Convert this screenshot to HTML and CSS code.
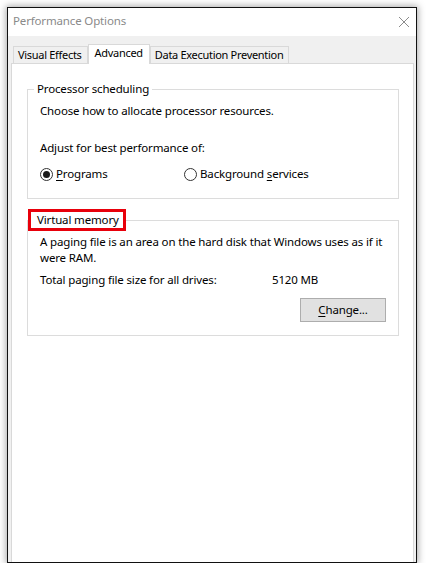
FILE: index.html
```html
<!DOCTYPE html>
<html>
<head>
<meta charset="utf-8">
<link rel="stylesheet" href="styles.css">
</head>
<body>
<div class="window">
  <div class="titlebar">
    <span class="title">Performance Options</span>
    <svg class="close" width="12" height="12" viewBox="0 0 12 12"><path d="M1 1 L11 11 M11 1 L1 11" stroke="#8c8c8c" stroke-width="1" fill="none"/></svg>
  </div>
  <div class="body">
    <div class="tabs">
      <div class="tab">Visual Effects</div>
      <div class="tab active">Advanced</div>
      <div class="tab">Data Execution Prevention</div>
    </div>
    <div class="panel">
      <fieldset class="group group-proc">
        <legend class="legend">Processor scheduling</legend>
        <p class="line">Choose how to allocate processor resources.</p>
        <p class="line adjust">Adjust for best performance of:</p>
        <div class="radios">
          <label class="radio radio-programs"><span class="dot checked"></span><span><u>P</u>rograms</span></label>
          <label class="radio"><span class="dot"></span><span>Background <u>s</u>ervices</span></label>
        </div>
      </fieldset>
      <fieldset class="group group-vm">
        <legend class="legend legend-red">Virtual memory</legend>
        <p class="line">A paging file is an area on the hard disk that Windows uses as if it were RAM.</p>
        <div class="total">
          <span class="total-label">Total paging file size for all drives:</span>
          <span>5120 MB</span>
        </div>
        <div class="actions">
          <button class="btn"><u>C</u>hange...</button>
        </div>
      </fieldset>
    </div>
  </div>
</div>
</body>
</html>
```

FILE: styles.css
```css
* { box-sizing: border-box; }
html, body { margin: 0; padding: 0; background: #ffffff; }
body {
  padding: 7px 0 0 7px;
  font-family: "Noto Sans", "Open Sans", sans-serif;
  font-size: 11.5px;
  letter-spacing: -0.15px;
  line-height: 16px;
  color: #000;
}
.window {
  width: 410px;
  height: 556px;
  border: 1px solid #111;
  background: #f0f0f0;
  box-shadow: 0 0 7px 1px rgba(0,0,0,0.35);
  overflow: hidden;
  display: flex;
  flex-direction: column;
}
.titlebar {
  height: 28px;
  background: #fff;
  display: flex;
  align-items: center;
  justify-content: space-between;
  padding: 0 6px 2px 5px;
  flex: none;
}
.title { color: #8a8a8a; }
.close { display: block; margin-top: 2px; }
.body {
  flex: 1;
  display: flex;
  flex-direction: column;
  padding: 7px 2px 0 3px;
}
.tabs {
  display: flex;
  align-items: flex-end;
  padding-left: 2px;
  height: 20px;
  flex: none;
}
.tab {
  height: 17px;
  border: 1px solid #d9d9d9;
  border-bottom: none;
  background: #f0f0f0;
  padding: 0 5px 0 4px;
  white-space: nowrap;
  font-size: 11px;
  letter-spacing: -0.3px;
}
.tab.active {
  height: 20px;
  margin-bottom: -1px;
  background: #fff;
  position: relative;
  z-index: 1;
  padding: 0 6px 0 6px;
}
.panel {
  flex: 1;
  background: #fff;
  border: 1px solid #d9d9d9;
  border-bottom: none;
  padding: 0 14px 0 15px;
}
.group {
  margin: 0;
  border: 1px solid #dcdcdc;
  padding: 0 12px 0 12px;
  min-width: 0;
}
.legend {
  padding: 0 3px;
  margin-left: -6px;
}
.group-proc { margin-top: 17px; padding-bottom: 16px; padding-top: 6px; }
.group-vm { margin-top: 10px; padding-bottom: 13px; padding-top: 3px; }
.legend-red {
  border: 3px solid #e8000b;
  padding: 0 4px 0 6px;
  margin-left: -12px;
}
.line { margin: 0; }
.adjust { margin-top: 21px; }
.radios {
  display: flex;
  margin-top: 10px;
}
.radio {
  display: flex;
  align-items: center;
  gap: 3px;
}
.radio-programs { width: 144px; }
.dot {
  width: 13px;
  height: 13px;
  border: 1px solid #333;
  border-radius: 50%;
  display: flex;
  align-items: center;
  justify-content: center;
  background: #fff;
}
.dot.checked::after {
  content: "";
  width: 7px;
  height: 7px;
  border-radius: 50%;
  background: #1a1a1a;
}
.total {
  display: flex;
  margin-top: 6px;
}
.total-label { width: 232px; }
.actions {
  display: flex;
  justify-content: flex-end;
  margin-top: 10px;
}
.btn {
  width: 86px;
  height: 24px;
  background: #e1e1e1;
  border: 1px solid #adadad;
  font: inherit;
  letter-spacing: inherit;
  color: #000;
  padding: 0;
}
u { text-decoration-thickness: 1px; text-underline-offset: 2px; }
```
